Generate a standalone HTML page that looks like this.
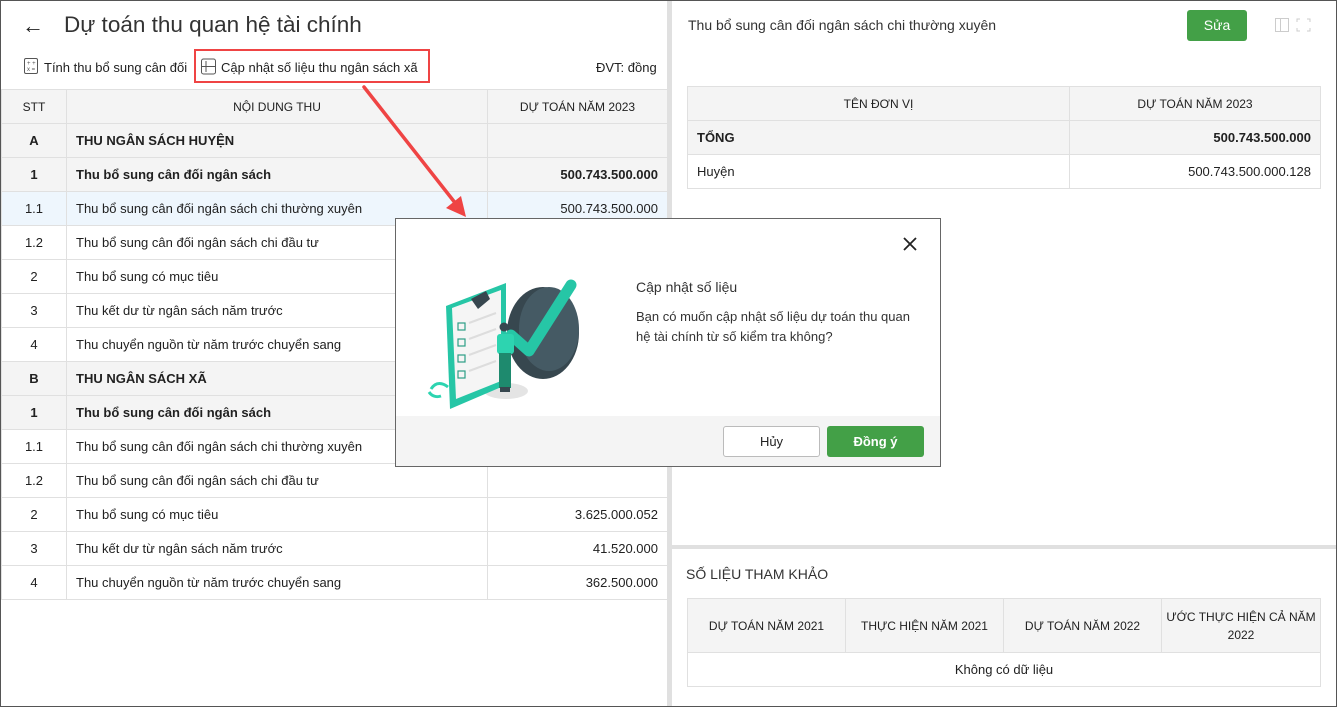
<!DOCTYPE html>
<html><head><meta charset="utf-8">
<style>
*{box-sizing:border-box;margin:0;padding:0}
body{width:1337px;height:707px;overflow:hidden;background:#fff;font-family:"Liberation Sans",Arial,sans-serif;color:#212121;position:relative;font-size:13px}
.frame{position:absolute;left:0;top:0;width:1337px;height:707px;border:1px solid #555;z-index:50;pointer-events:none}
.abs{position:absolute}
table{border-collapse:collapse;table-layout:fixed}
td,th{border:1px solid #e0e0e0;font-weight:normal;font-size:13px;padding:0 9px;white-space:nowrap}
.lt td,.lt th{height:34px}
.lt th{background:#f4f4f4;font-size:12px}
.b{font-weight:bold}
.g td{background:#f4f4f4}
.sel td{background:#eef6fd}
.r{text-align:right}
.c{text-align:center}
</style></head><body>
<div class="frame"></div>
<div class="abs" style="left:22px;top:13px;font-size:22px">&#8592;</div>
<div class="abs" style="left:64px;top:12px;font-size:22.5px;color:#333">Dự toán thu quan hệ tài chính</div>
<svg class="abs" style="left:24px;top:58px" width="14" height="16" viewBox="0 0 14 16"><rect x="0.5" y="0.5" width="13" height="15" rx="1.5" fill="none" stroke="#555"/><text x="3" y="7" font-size="6" fill="#555">+ +</text><text x="3" y="13" font-size="6" fill="#555">x =</text></svg>
<div class="abs" style="left:44px;top:60px;font-size:13px">Tính thu bổ sung cân đối</div>
<div class="abs" style="left:194px;top:49px;width:236px;height:34px;border:2px solid #ef4444"></div>
<svg class="abs" style="left:201px;top:58px" width="15" height="17" viewBox="0 0 15 17"><rect x="0.5" y="1" width="14" height="15" rx="2" fill="none" stroke="#555"/><line x1="1" y1="8.5" x2="14" y2="8.5" stroke="#555"/><line x1="5" y1="3" x2="5" y2="14" stroke="#555"/></svg>
<div class="abs" style="left:221px;top:60px;font-size:13px">Cập nhật số liệu thu ngân sách xã</div>
<div class="abs" style="left:596px;top:60px;font-size:13px">ĐVT: đồng</div>
<table class="abs lt" style="left:1px;top:89px;width:666px">
<colgroup><col style="width:65px"><col style="width:421px"><col style="width:180px"></colgroup>
<tr><th class="c">STT</th><th class="c">NỘI DUNG THU</th><th class="c">DỰ TOÁN NĂM 2023</th></tr>
<tr class="g"><td class="c b">A</td><td class="b">THU NGÂN SÁCH HUYỆN</td><td></td></tr>
<tr class="g"><td class="c b">1</td><td class="b">Thu bổ sung cân đối ngân sách</td><td class="r b">500.743.500.000</td></tr>
<tr class="sel"><td class="c">1.1</td><td>Thu bổ sung cân đối ngân sách chi thường xuyên</td><td class="r">500.743.500.000</td></tr>
<tr><td class="c">1.2</td><td>Thu bổ sung cân đối ngân sách chi đầu tư</td><td></td></tr>
<tr><td class="c">2</td><td>Thu bổ sung có mục tiêu</td><td></td></tr>
<tr><td class="c">3</td><td>Thu kết dư từ ngân sách năm trước</td><td></td></tr>
<tr><td class="c">4</td><td>Thu chuyển nguồn từ năm trước chuyển sang</td><td></td></tr>
<tr class="g"><td class="c b">B</td><td class="b">THU NGÂN SÁCH XÃ</td><td></td></tr>
<tr class="g"><td class="c b">1</td><td class="b">Thu bổ sung cân đối ngân sách</td><td></td></tr>
<tr><td class="c">1.1</td><td>Thu bổ sung cân đối ngân sách chi thường xuyên</td><td></td></tr>
<tr><td class="c">1.2</td><td>Thu bổ sung cân đối ngân sách chi đầu tư</td><td></td></tr>
<tr><td class="c">2</td><td>Thu bổ sung có mục tiêu</td><td class="r">3.625.000.052</td></tr>
<tr><td class="c">3</td><td>Thu kết dư từ ngân sách năm trước</td><td class="r">41.520.000</td></tr>
<tr><td class="c">4</td><td>Thu chuyển nguồn từ năm trước chuyển sang</td><td class="r">362.500.000</td></tr>
</table>
<div class="abs" style="left:667px;top:0;width:5px;height:707px;background:#e0e0e0"></div>
<div class="abs" style="left:688px;top:17px;font-size:14px;color:#333">Thu bổ sung cân đối ngân sách chi thường xuyên</div>
<div class="abs" style="left:1187px;top:10px;width:60px;height:31px;background:#43a047;border-radius:3px;color:#fff;font-size:14px;text-align:center;line-height:31px">Sửa</div>
<svg class="abs" style="left:1275px;top:18px" width="36" height="16"><rect x="0.5" y="0.5" width="13" height="13" fill="none" stroke="#ccc"/><line x1="5.5" y1="0" x2="5.5" y2="14" stroke="#ccc"/><path d="M22 4V1h3M32 1h3v3M35 10v3h-3M25 13h-3v-3" fill="none" stroke="#ccc"/></svg>
<table class="abs lt" style="left:687px;top:86px;width:633px">
<colgroup><col style="width:382px"><col style="width:251px"></colgroup>
<tr><th class="c">TÊN ĐƠN VỊ</th><th class="c">DỰ TOÁN NĂM 2023</th></tr>
<tr class="g"><td class="b">TỔNG</td><td class="r b">500.743.500.000</td></tr>
<tr><td>Huyện</td><td class="r">500.743.500.000.128</td></tr>
</table>
<div class="abs" style="left:672px;top:545px;width:665px;height:4px;background:#e0e0e0"></div>
<div class="abs" style="left:686px;top:566px;font-size:14px;color:#333">SỐ LIỆU THAM KHẢO</div>
<table class="abs" style="left:687px;top:598px;width:633px">
<colgroup><col style="width:158px"><col style="width:158px"><col style="width:158px"><col style="width:159px"></colgroup>
<tr style="height:54px;background:#f4f4f4"><th class="c" style="font-size:12px">DỰ TOÁN NĂM 2021</th><th class="c" style="font-size:12px">THỰC HIỆN NĂM 2021</th><th class="c" style="font-size:12px">DỰ TOÁN NĂM 2022</th><th class="c" style="font-size:12px;white-space:normal;line-height:18px;padding:0 4px">ƯỚC THỰC HIỆN CẢ NĂM 2022</th></tr>
<tr style="height:34px"><td colspan="4" class="c">Không có dữ liệu</td></tr>
</table>
<svg class="abs" style="left:0;top:0;z-index:20" width="1337" height="707"><line x1="364" y1="87" x2="456" y2="204" stroke="#ef4444" stroke-width="3.5" stroke-linecap="round"/><polygon points="466,217 446,208 461,196" fill="#ef4444"/></svg>
<div class="abs" style="left:395px;top:218px;width:546px;height:249px;background:#fff;border:1px solid #666;z-index:30">
 <div class="abs" style="left:0;top:197px;width:544px;height:50px;background:#f4f4f4"></div>
 <svg class="abs" style="left:506px;top:17px" width="16" height="16"><path d="M2 2L14 14M14 2L2 14" stroke="#222" stroke-width="1.8"/></svg>
 <div class="abs" style="left:240px;top:60px;font-size:14px;color:#333">Cập nhật số liệu</div>
 <div class="abs" style="left:240px;top:88px;font-size:13px;color:#333;line-height:20px">Bạn có muốn cập nhật số liệu dự toán thu quan<br>hệ tài chính từ số kiểm tra không?</div>
 <div class="abs" style="left:327px;top:207px;width:97px;height:31px;border:1px solid #bbb;border-radius:3px;background:#fff;text-align:center;line-height:29px;font-size:13px">Hủy</div>
 <div class="abs" style="left:431px;top:207px;width:97px;height:31px;background:#43a047;border-radius:3px;color:#fff;text-align:center;line-height:31px;font-size:13px;font-weight:bold">Đồng ý</div>
 <svg class="abs" style="left:30px;top:55px" width="160" height="140" viewBox="425 273 160 140">
  <ellipse cx="505" cy="390" rx="22" ry="8" fill="#e4e4e4"/>
  <path d="M430 388c5-8 12-6 17 -2M576 345c-6-5-12-3-16 2M440 395c-6 2-10-1-12-4" stroke="#2dd4b0" stroke-width="3" fill="none"/>
  <ellipse cx="542" cy="332" rx="36" ry="46" fill="#37474f"/>
  <ellipse cx="548" cy="328" rx="30" ry="42" fill="#455a64"/>
  <polygon points="445,305 505,282 505,384 449,408" fill="#26c6a6"/>
  <polygon points="451,307 500,289 500,380 455,398" fill="#f5f5f5"/>
  <path d="M470 298l15-8 4 8-12 10z" fill="#37474f"/>
  <g stroke="#2c9e86" fill="none" stroke-width="1.2"><rect x="457" y="322" width="7" height="7"/><rect x="457" y="338" width="7" height="7"/><rect x="457" y="354" width="7" height="7"/><rect x="457" y="370" width="7" height="7"/></g>
  <g stroke="#ddd" stroke-width="2"><line x1="468" y1="322" x2="495" y2="312"/><line x1="468" y1="338" x2="495" y2="328"/><line x1="468" y1="354" x2="495" y2="344"/><line x1="468" y1="370" x2="495" y2="360"/></g>
  <path d="M510 334L528 350L570 284" stroke="#26c6a6" stroke-width="11" fill="none" stroke-linejoin="round" stroke-linecap="round"/>
  <circle cx="503" cy="326" r="4.5" fill="#37474f"/>
  <rect x="496" y="333" width="17" height="20" rx="3" fill="#2dd4b0"/>
  <rect x="498" y="352" width="12" height="35" fill="#1e8a6e"/>
  <rect x="499" y="386" width="10" height="5" fill="#37474f"/>
 </svg>
</div>
</body></html>
